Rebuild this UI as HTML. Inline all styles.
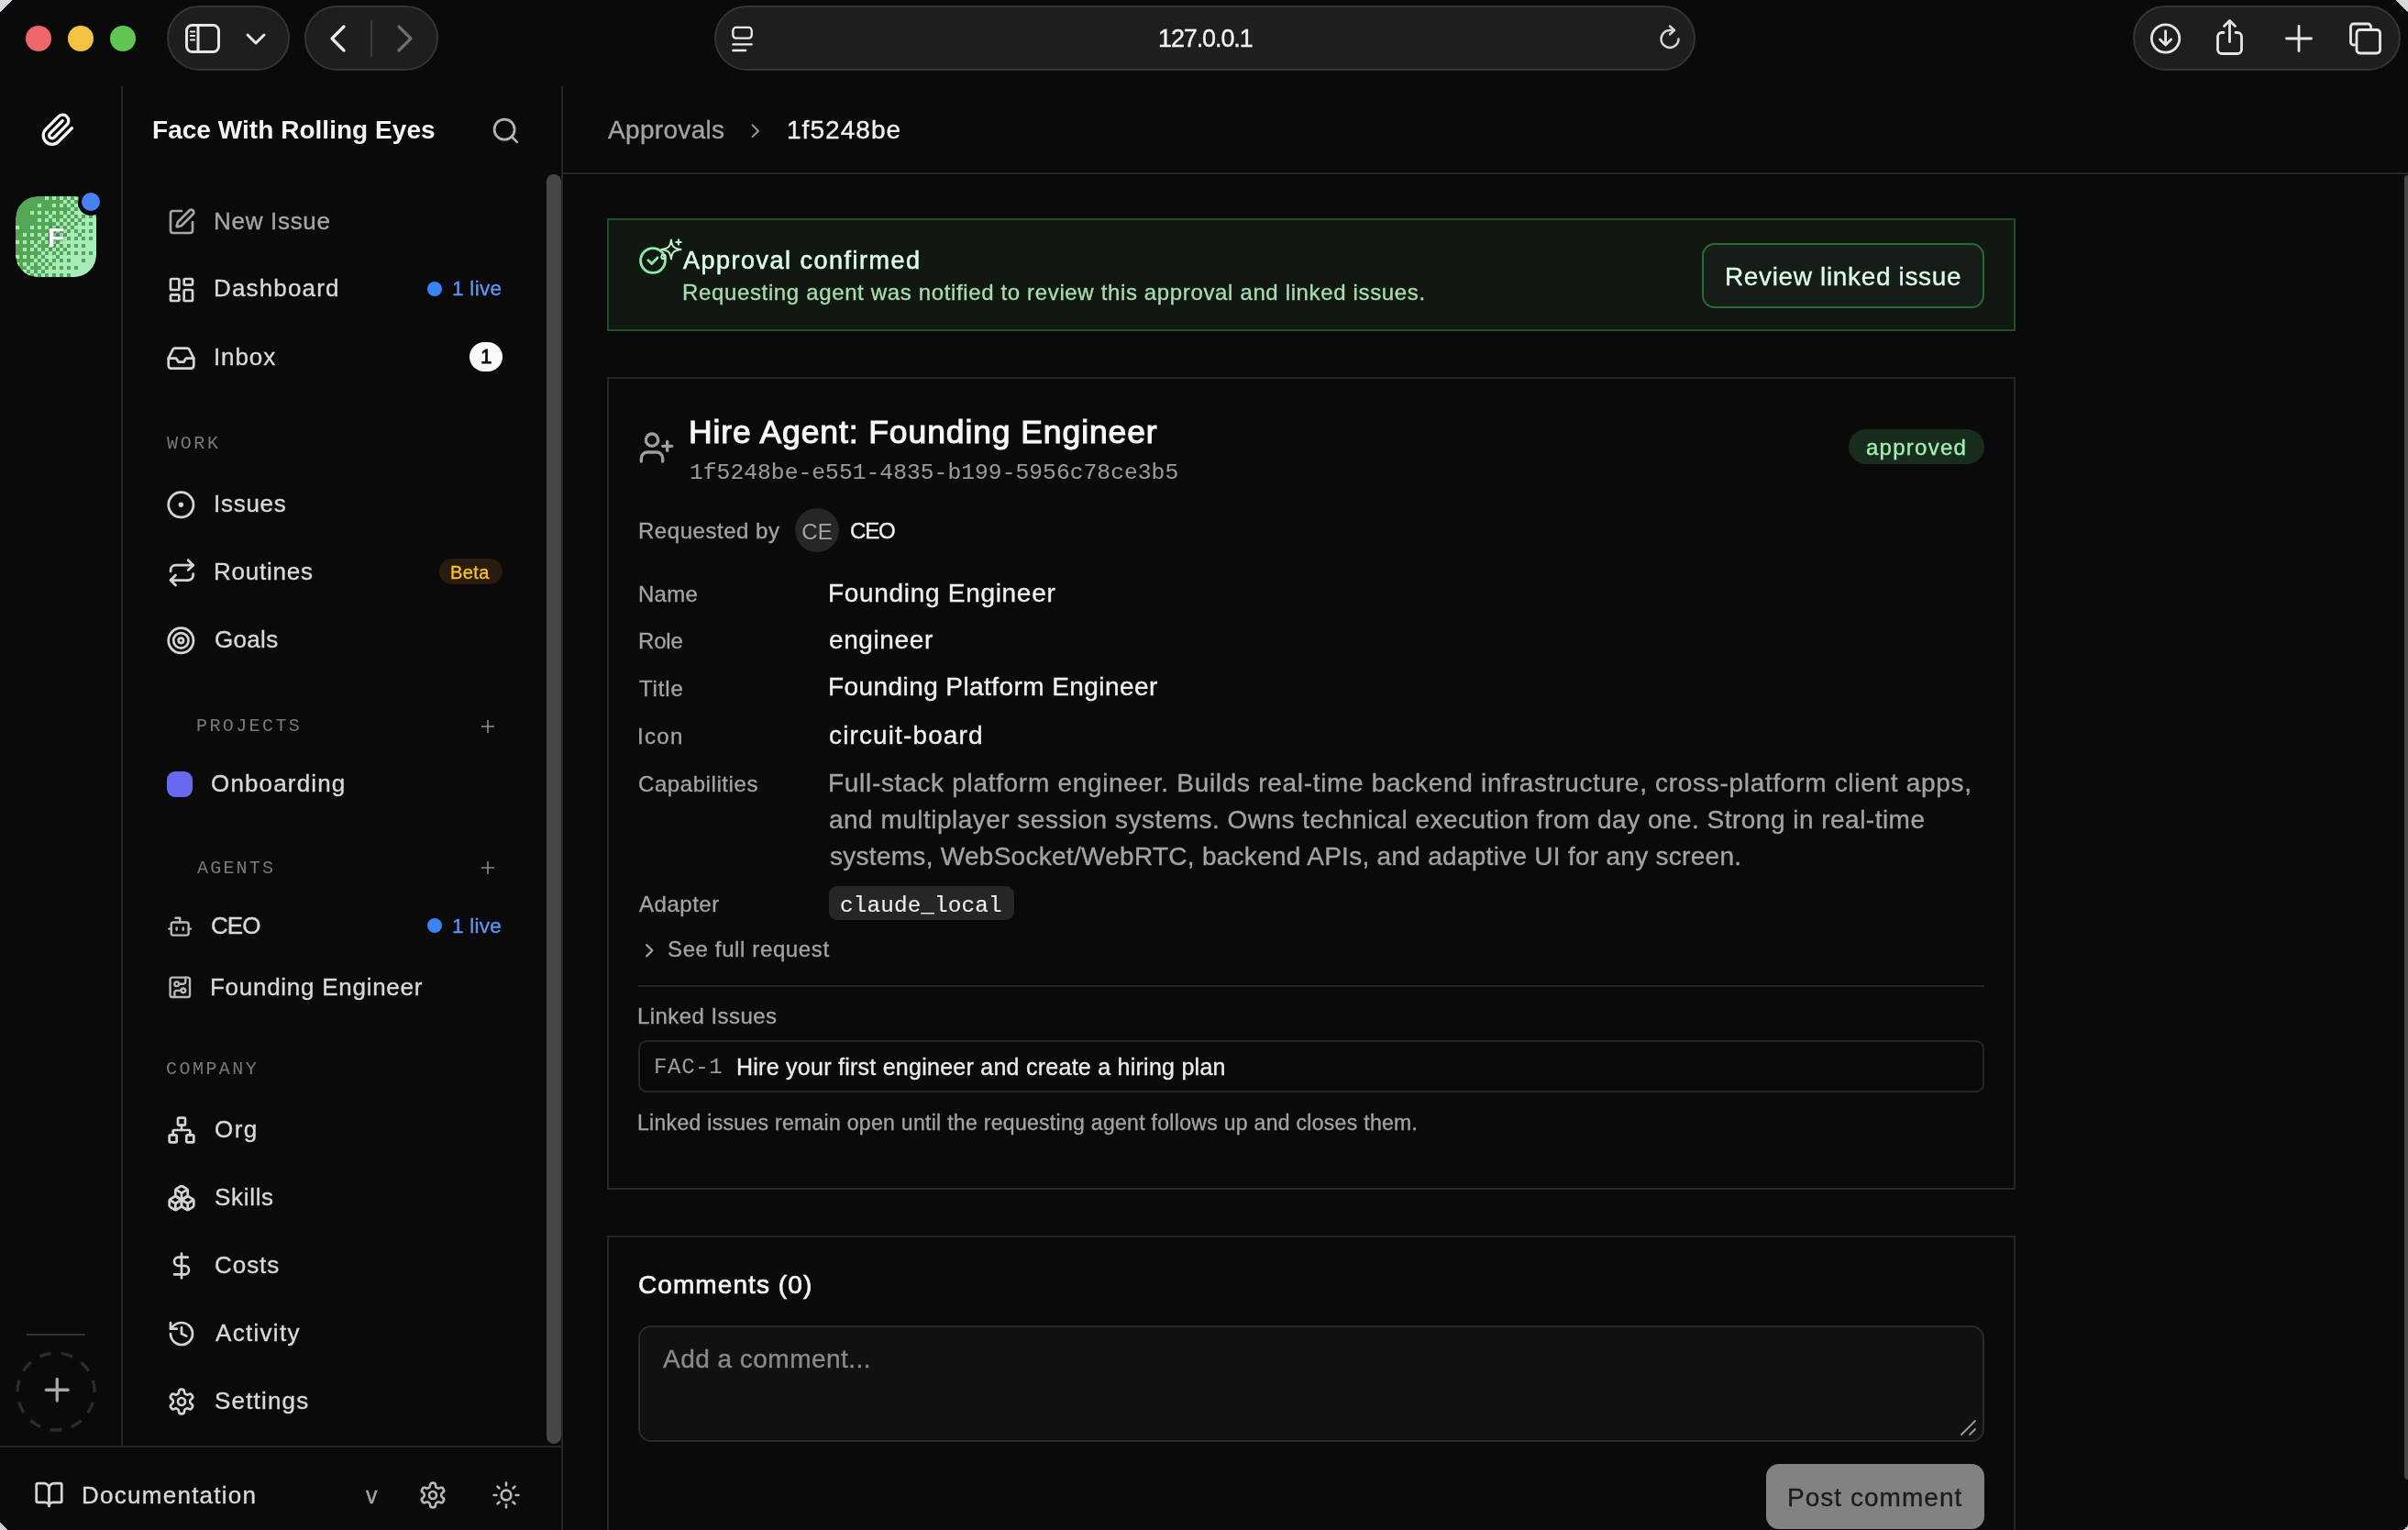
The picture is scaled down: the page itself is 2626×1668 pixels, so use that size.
<!DOCTYPE html>
<html><head><meta charset="utf-8"><title>Approval</title>
<style>
html,body{margin:0;padding:0;background:#0a0a0a;width:2626px;height:1668px;overflow:hidden;font-family:"Liberation Sans", sans-serif;}
.t{position:absolute;white-space:pre;-webkit-font-smoothing:antialiased;will-change:transform;}
.a{position:absolute;box-sizing:border-box;}
svg.i{position:absolute;fill:none;stroke-linecap:round;stroke-linejoin:round;}
</style></head><body>
<div class='a' style='left:0;top:0;width:13px;height:13px;background:linear-gradient(135deg,#d6d9df 50%,transparent 50%)'></div>
<div class='a' style='left:2613px;top:0;width:13px;height:13px;background:linear-gradient(225deg,#d6d9df 50%,transparent 50%)'></div>
<div class='a' style='left:0;top:1660px;width:8px;height:8px;background:linear-gradient(45deg,#cfcfcf 50%,transparent 50%)'></div>
<div class='a' style='left:2621px;top:1663px;width:5px;height:5px;background:linear-gradient(315deg,#cfcfcf 50%,transparent 50%)'></div>
<div class='a' style='left:28px;top:28px;width:28px;height:28px;border-radius:50%;background:#ee6767;'></div>
<div class='a' style='left:74px;top:28px;width:28px;height:28px;border-radius:50%;background:#f5c342;'></div>
<div class='a' style='left:120px;top:28px;width:28px;height:28px;border-radius:50%;background:#61c554;'></div>
<div class='a' style='left:182px;top:6px;width:134px;height:71px;background:#1e1e1e;border:2px solid #343434;border-radius:36px;'></div>
<div class='a' style='left:332px;top:6px;width:146px;height:71px;background:#1e1e1e;border:2px solid #343434;border-radius:36px;'></div>
<div class='a' style='left:779px;top:6px;width:1070px;height:71px;background:#1e1e1e;border:2px solid #343434;border-radius:36px;'></div>
<div class='a' style='left:2326px;top:6px;width:292px;height:71px;background:#1e1e1e;border:2px solid #343434;border-radius:36px;'></div>
<svg class='i' style='left:200px;top:25px' width='42' height='34' viewBox='0 0 42 34' stroke='#e6e6e6' stroke-width='3'><rect x='3.5' y='2.5' width='35' height='29' rx='6'/><path d='M16 3v28'/><path d='M8 9.5h4M8 14h4M8 18.5h4' stroke-width='2.2'/></svg>
<svg class='i' style='left:266px;top:34px' width='26' height='18' viewBox='0 0 26 18' stroke='#e6e6e6' stroke-width='3'><path d='M4 4l9 9 9-9'/></svg>
<svg class='i' style='left:356px;top:24px' width='26' height='36' viewBox='0 0 26 36' stroke='#ebebeb' stroke-width='3.2'><path d='M19 5L6 18l13 13'/></svg>
<div class='a' style='left:404px;top:22px;width:2px;height:40px;background:#3a3a3a;'></div>
<svg class='i' style='left:428px;top:24px' width='26' height='36' viewBox='0 0 26 36' stroke='#6e6e6e' stroke-width='3.2'><path d='M7 5l13 13-13 13'/></svg>
<svg class='i' style='left:795px;top:26px' width='30' height='34' viewBox='0 0 30 34' stroke='#ececec' stroke-width='2.3'><rect x='4.35' y='3.95' width='20.4' height='11.7' rx='3.4'/><path d='M4.35 22.4h20.4M4.35 29h13.9'/></svg>
<svg class='i' style='left:1806px;top:25px' width='32' height='34' viewBox='0 0 32 34' stroke='#d6d6d6' stroke-width='2.4'><path d='M24.5 17.5a9.5 9.5 0 1 1-9.5-9.5h4'/><path d='M15 3.5l5 4.5-5 4.5'/></svg>
<svg class='i' style='left:2341px;top:21px' width='42' height='42' viewBox='0 0 42 42' stroke='#e6e6e6' stroke-width='2.8'><circle cx='20.6' cy='21' r='15.2'/><path d='M20.6 13v14.5M14.5 22l6.1 6 6.1-6'/></svg>
<svg class='i' style='left:2413px;top:19px' width='40' height='44' viewBox='0 0 40 44' stroke='#e6e6e6' stroke-width='2.8'><path d='M12 16.5h-2a4.5 4.5 0 0 0-4.5 4.5v14a4.5 4.5 0 0 0 4.5 4.5h17a4.5 4.5 0 0 0 4.5-4.5V21a4.5 4.5 0 0 0-4.5-4.5h-2'/><path d='M18.5 26.5V4M12.5 9.5l6-6 6 6'/></svg>
<svg class='i' style='left:2490px;top:25px' width='34' height='34' viewBox='0 0 34 34' stroke='#e6e6e6' stroke-width='2.8'><path d='M3.5 17h27M17 3.5v27'/></svg>
<svg class='i' style='left:2558px;top:21px' width='44' height='42' viewBox='0 0 44 42' stroke='#e6e6e6' stroke-width='2.8'><path d='M9.5 28h-1a3 3 0 0 1-3-3V8a3 3 0 0 1 3-3h16a3 3 0 0 1 3 3v1'/><rect x='12' y='11.5' width='25.5' height='25.5' rx='3.5'/></svg>
<div class='a' style='left:132px;top:94px;width:2px;height:1483px;background:#262626;'></div>
<div class='a' style='left:611.5px;top:94px;width:2.0px;height:1574px;background:#262626;'></div>
<div class='a' style='left:0px;top:1576px;width:612px;height:2px;background:#262626;'></div>
<div class='a' style='left:29px;top:1453.5px;width:64px;height:2.0px;background:#333;'></div>
<svg class='i' style='left:17px;top:1472.5px' width='88' height='88' viewBox='0 0 88 88' stroke='#2b2b2b' stroke-width='3.4'><circle cx='44' cy='44' r='42' stroke-dasharray='13 10.99' transform='rotate(81.1 44 44)' stroke-linecap='butt'/></svg>
<svg class='i' style='left:41.75px;top:1495.45px;' width='40.5' height='40.5' viewBox='0 0 24 24' stroke='#a8a8a8' stroke-width='1.95'><path d="M5 12h14"/><path d="M12 5v14"/></svg>
<svg class='i' style='left:44.15px;top:122.35px;' width='38.5' height='38.5' viewBox='0 0 24 24' stroke='#f5f5f5' stroke-width='2.05'><path d="m21.44 11.05-9.19 9.19a6 6 0 0 1-8.49-8.49l8.57-8.57A4 4 0 1 1 18 8.84l-8.59 8.57a2 2 0 0 1-2.83-2.83l8.49-8.48"/></svg>
<svg class='i' style='left:535.40px;top:126.00px;' width='33' height='33' viewBox='0 0 24 24' stroke='#b3b3b3' stroke-width='2'><circle cx="11" cy="11" r="8"/><path d="m21 21-4.3-4.3"/></svg>
<div class='a' style='left:596px;top:190px;width:16px;height:1384px;background:#474747;border-radius:8px;'></div>
<svg class='i' style='left:182.20px;top:225.50px;' width='32' height='32' viewBox='0 0 24 24' stroke='#a6a6a6' stroke-width='2'><path d="M12 3H5a2 2 0 0 0-2 2v14a2 2 0 0 0 2 2h14a2 2 0 0 0 2-2v-7"/><path d="M18.375 2.625a1 1 0 0 1 3 3l-9.013 9.014a2 2 0 0 1-.853.505l-2.873.84a.5.5 0 0 1-.62-.62l.84-2.873a2 2 0 0 1 .506-.852z"/></svg>
<svg class='i' style='left:181.90px;top:300.00px;' width='32' height='32' viewBox='0 0 24 24' stroke='#d4d4d4' stroke-width='2'><rect width="7" height="9" x="3" y="3" rx="1"/><rect width="7" height="5" x="14" y="3" rx="1"/><rect width="7" height="9" x="14" y="12" rx="1"/><rect width="7" height="5" x="3" y="16" rx="1"/></svg>
<svg class='i' style='left:181.30px;top:373.50px;' width='33' height='33' viewBox='0 0 24 24' stroke='#d4d4d4' stroke-width='2'><polyline points="22 12 16 12 14 15 10 15 8 12 2 12"/><path d="M5.45 5.11 2 12v6a2 2 0 0 0 2 2h16a2 2 0 0 0 2-2v-6l-3.45-6.89A2 2 0 0 0 16.760 4H7.24a2 2 0 0 0-1.79 1.11z"/></svg>
<svg class='i' style='left:181.45px;top:533.65px;' width='32.7' height='32.7' viewBox='0 0 24 24' stroke='#d4d4d4' stroke-width='2'><circle cx="12" cy="12" r="10"/><circle cx="12" cy="12" r="1"/></svg>
<svg class='i' style='left:181.55px;top:607.75px;' width='32.7' height='32.7' viewBox='0 0 24 24' stroke='#d4d4d4' stroke-width='2'><path d="m17 2 4 4-4 4"/><path d="M3 11v-1a4 4 0 0 1 4-4h14"/><path d="m7 22-4-4 4-4"/><path d="M21 13v1a4 4 0 0 1-4 4H3"/></svg>
<svg class='i' style='left:181.45px;top:681.55px;' width='32.7' height='32.7' viewBox='0 0 24 24' stroke='#d4d4d4' stroke-width='2'><circle cx="12" cy="12" r="10"/><circle cx="12" cy="12" r="6"/><circle cx="12" cy="12" r="2"/></svg>
<svg class='i' style='left:181.70px;top:995.60px;' width='28.4' height='28.4' viewBox='0 0 24 24' stroke='#b8b8b8' stroke-width='2'><path d="M12 8V4H8"/><rect width="16" height="12" x="4" y="8" rx="2"/><path d="M2 14h2"/><path d="M20 14h2"/><path d="M15 13v2"/><path d="M9 13v2"/></svg>
<svg class='i' style='left:181.60px;top:1061.60px;' width='28.6' height='28.6' viewBox='0 0 24 24' stroke='#b8b8b8' stroke-width='2'><rect width="18" height="18" x="3" y="3" rx="2"/><path d="M11 9h4a2 2 0 0 0 2-2V3"/><circle cx="9" cy="9" r="2"/><path d="M7 21v-4a2 2 0 0 1 2-2h4"/><circle cx="15" cy="15" r="2"/></svg>
<svg class='i' style='left:182.00px;top:1216.00px;' width='32' height='32' viewBox='0 0 24 24' stroke='#d4d4d4' stroke-width='2'><rect x="16" y="16" width="6" height="6" rx="1"/><rect x="2" y="16" width="6" height="6" rx="1"/><rect x="9" y="2" width="6" height="6" rx="1"/><path d="M5 16v-3a1 1 0 0 1 1-1h12a1 1 0 0 1 1 1v3"/><path d="M12 12V8"/></svg>
<svg class='i' style='left:182.00px;top:1290.00px;' width='32' height='32' viewBox='0 0 24 24' stroke='#d4d4d4' stroke-width='2'><path d="M2.97 12.92A2 2 0 0 0 2 14.63v3.24a2 2 0 0 0 .97 1.71l3 1.8a2 2 0 0 0 2.060 0L12 19v-5.5l-5-3-4.03 2.42Z"/><path d="m7 16.5-4.74-2.85"/><path d="m7 16.5 5-3"/><path d="M7 16.5v5.17"/><path d="M12 13.5V19l3.97 2.38a2 2 0 0 0 2.06 0l3-1.8a2 2 0 0 0 .97-1.71v-3.24a2 2 0 0 0-.97-1.71L17 10.5l-5 3Z"/><path d="m17 16.5-5-3"/><path d="m17 16.5 4.740-2.85"/><path d="M17 16.5v5.17"/><path d="M7.97 4.42A2 2 0 0 0 7 6.13v4.37l5 3 5-3V6.13a2 2 0 0 0-.97-1.71l-3-1.8a2 2 0 0 0-2.06 0l-3 1.8Z"/><path d="M12 8 7.26 5.15"/><path d="m12 8 4.74-2.85"/><path d="M12 13.5V8"/></svg>
<svg class='i' style='left:181.50px;top:1364.00px;' width='32' height='32' viewBox='0 0 24 24' stroke='#d4d4d4' stroke-width='2'><line x1="12" x2="12" y1="2" y2="22"/><path d="M17 5H9.5a3.5 3.5 0 0 0 0 7h5a3.5 3.5 0 0 1 0 7H6"/></svg>
<svg class='i' style='left:181.80px;top:1438.10px;' width='32' height='32' viewBox='0 0 24 24' stroke='#d4d4d4' stroke-width='2'><path d="M3 12a9 9 0 1 0 9-9 9.75 9.75 0 0 0-6.74 2.74L3 8"/><path d="M3 3v5h5"/><path d="M12 7v5l4 2"/></svg>
<svg class='i' style='left:181.80px;top:1511.70px;' width='32' height='32' viewBox='0 0 24 24' stroke='#d4d4d4' stroke-width='2'><path d="M12.22 2h-.44a2 2 0 0 0-2 2v.18a2 2 0 0 1-1 1.73l-.43.25a2 2 0 0 1-2 0l-.15-.08a2 2 0 0 0-2.73.73l-.22.38a2 2 0 0 0 .73 2.73l.15.1a2 2 0 0 1 1 1.72v.51a2 2 0 0 1-1 1.74l-.15.09a2 2 0 0 0-.73 2.73l.22.38a2 2 0 0 0 2.73.73l.15-.08a2 2 0 0 1 2 0l.43.25a2 2 0 0 1 1 1.73V20a2 2 0 0 0 2 2h.44a2 2 0 0 0 2-2v-.18a2 2 0 0 1 1-1.73l.43-.25a2 2 0 0 1 2 0l.15.08a2 2 0 0 0 2.73-.73l.22-.39a2 2 0 0 0-.73-2.73l-.15-.08a2 2 0 0 1-1-1.74v-.5a2 2 0 0 1 1-1.74l.15-.09a2 2 0 0 0 .73-2.730l-.22-.38a2 2 0 0 0-2.73-.73l-.15.08a2 2 0 0 1-2 0l-.43-.25a2 2 0 0 1-1-1.73V4a2 2 0 0 0-2-2z"/><circle cx="12" cy="12" r="3"/></svg>
<svg class='i' style='left:37.30px;top:1613.30px;' width='33' height='33' viewBox='0 0 24 24' stroke='#d4d4d4' stroke-width='2'><path d="M12 7v14"/><path d="M3 18a1 1 0 0 1-1-1V4a1 1 0 0 1 1-1h5a4 4 0 0 1 4 4 4 4 0 0 1 4-4h5a1 1 0 0 1 1 1v13a1 1 0 0 1-1 1h-6a3 3 0 0 0-3 3 3 3 0 0 0-3-3z"/></svg>
<svg class='i' style='left:456.00px;top:1613.80px;' width='32' height='32' viewBox='0 0 24 24' stroke='#b8b8b8' stroke-width='2'><path d="M12.22 2h-.44a2 2 0 0 0-2 2v.18a2 2 0 0 1-1 1.73l-.43.25a2 2 0 0 1-2 0l-.15-.08a2 2 0 0 0-2.73.73l-.22.38a2 2 0 0 0 .73 2.73l.15.1a2 2 0 0 1 1 1.72v.51a2 2 0 0 1-1 1.74l-.15.09a2 2 0 0 0-.73 2.73l.22.38a2 2 0 0 0 2.73.73l.15-.08a2 2 0 0 1 2 0l.43.25a2 2 0 0 1 1 1.73V20a2 2 0 0 0 2 2h.44a2 2 0 0 0 2-2v-.18a2 2 0 0 1 1-1.73l.43-.25a2 2 0 0 1 2 0l.15.08a2 2 0 0 0 2.73-.73l.22-.39a2 2 0 0 0-.73-2.73l-.15-.08a2 2 0 0 1-1-1.74v-.5a2 2 0 0 1 1-1.74l.15-.09a2 2 0 0 0 .73-2.730l-.22-.38a2 2 0 0 0-2.73-.73l-.15.08a2 2 0 0 1-2 0l-.43-.25a2 2 0 0 1-1-1.73V4a2 2 0 0 0-2-2z"/><circle cx="12" cy="12" r="3"/></svg>
<svg class='i' style='left:535.60px;top:1613.80px;' width='32' height='32' viewBox='0 0 24 24' stroke='#b8b8b8' stroke-width='2'><circle cx="12" cy="12" r="4"/><path d="M12 2v2"/><path d="M12 20v2"/><path d="m4.93 4.93 1.41 1.41"/><path d="m17.66 17.66 1.41 1.41"/><path d="M2 12h2"/><path d="M20 12h2"/><path d="m6.34 17.66-1.41 1.41"/><path d="m19.07 4.93-1.41 1.41"/></svg>
<div class='a' style='left:465.7px;top:306.8px;width:16.0px;height:16.0px;border-radius:50%;background:#3b82f6;'></div>
<div class='a' style='left:466px;top:1000.9px;width:16px;height:16.0px;border-radius:50%;background:#3b82f6;'></div>
<div class='a' style='left:512px;top:373px;width:36px;height:32px;border-radius:16px;background:#fafafa;'></div>
<div class='a' style='left:479px;top:609px;width:69px;height:28px;border-radius:14px;background:#2b1a0e;'></div>
<svg class='i' style='left:521.00px;top:781.00px;' width='22' height='22' viewBox='0 0 24 24' stroke='#8a8a8a' stroke-width='1.8'><path d="M5 12h14"/><path d="M12 5v14"/></svg>
<svg class='i' style='left:521.00px;top:935.00px;' width='22' height='22' viewBox='0 0 24 24' stroke='#8a8a8a' stroke-width='1.8'><path d="M5 12h14"/><path d="M12 5v14"/></svg>
<div class='a' style='left:181.8px;top:841px;width:28.19999999999999px;height:28px;border-radius:9px;background:#6b68f0;'></div>
<svg class='i' style='left:17px;top:213.5px;border-radius:24px;overflow:hidden' width='88' height='88' viewBox='0 0 88 88'><defs><clipPath id='av'><rect x='0' y='0' width='88' height='88' rx='24'/></clipPath></defs><g clip-path='url(#av)'><rect x='0' y='0' width='88' height='88' fill='#55a655' stroke='none'/><g fill='#a8ebbb' stroke='none'><rect x='32' y='0' width='4' height='4'/><rect x='40' y='0' width='4' height='4'/><rect x='48' y='0' width='4' height='4'/><rect x='56' y='0' width='4' height='4'/><rect x='64' y='0' width='4' height='4'/><rect x='72' y='0' width='4' height='4'/><rect x='80' y='0' width='4' height='4'/><rect x='84' y='0' width='4' height='4'/><rect x='52' y='4' width='4' height='4'/><rect x='60' y='4' width='4' height='4'/><rect x='68' y='4' width='4' height='4'/><rect x='76' y='4' width='4' height='4'/><rect x='84' y='4' width='4' height='4'/><rect x='24' y='8' width='4' height='4'/><rect x='40' y='8' width='4' height='4'/><rect x='48' y='8' width='4' height='4'/><rect x='56' y='8' width='4' height='4'/><rect x='64' y='8' width='4' height='4'/><rect x='72' y='8' width='4' height='4'/><rect x='80' y='8' width='4' height='4'/><rect x='60' y='12' width='4' height='4'/><rect x='68' y='12' width='4' height='4'/><rect x='76' y='12' width='4' height='4'/><rect x='84' y='12' width='4' height='4'/><rect x='16' y='16' width='4' height='4'/><rect x='24' y='16' width='4' height='4'/><rect x='32' y='16' width='4' height='4'/><rect x='40' y='16' width='4' height='4'/><rect x='48' y='16' width='4' height='4'/><rect x='56' y='16' width='4' height='4'/><rect x='64' y='16' width='4' height='4'/><rect x='68' y='16' width='4' height='4'/><rect x='72' y='16' width='4' height='4'/><rect x='80' y='16' width='4' height='4'/><rect x='84' y='16' width='4' height='4'/><rect x='36' y='20' width='4' height='4'/><rect x='52' y='20' width='4' height='4'/><rect x='60' y='20' width='4' height='4'/><rect x='68' y='20' width='4' height='4'/><rect x='76' y='20' width='4' height='4'/><rect x='84' y='20' width='4' height='4'/><rect x='24' y='24' width='4' height='4'/><rect x='32' y='24' width='4' height='4'/><rect x='40' y='24' width='4' height='4'/><rect x='48' y='24' width='4' height='4'/><rect x='56' y='24' width='4' height='4'/><rect x='64' y='24' width='4' height='4'/><rect x='72' y='24' width='4' height='4'/><rect x='76' y='24' width='4' height='4'/><rect x='80' y='24' width='4' height='4'/><rect x='84' y='24' width='4' height='4'/><rect x='44' y='28' width='4' height='4'/><rect x='52' y='28' width='4' height='4'/><rect x='60' y='28' width='4' height='4'/><rect x='68' y='28' width='4' height='4'/><rect x='76' y='28' width='4' height='4'/><rect x='84' y='28' width='4' height='4'/><rect x='0' y='32' width='4' height='4'/><rect x='16' y='32' width='4' height='4'/><rect x='24' y='32' width='4' height='4'/><rect x='32' y='32' width='4' height='4'/><rect x='40' y='32' width='4' height='4'/><rect x='48' y='32' width='4' height='4'/><rect x='56' y='32' width='4' height='4'/><rect x='64' y='32' width='4' height='4'/><rect x='68' y='32' width='4' height='4'/><rect x='72' y='32' width='4' height='4'/><rect x='76' y='32' width='4' height='4'/><rect x='80' y='32' width='4' height='4'/><rect x='84' y='32' width='4' height='4'/><rect x='36' y='36' width='4' height='4'/><rect x='44' y='36' width='4' height='4'/><rect x='52' y='36' width='4' height='4'/><rect x='60' y='36' width='4' height='4'/><rect x='68' y='36' width='4' height='4'/><rect x='76' y='36' width='4' height='4'/><rect x='84' y='36' width='4' height='4'/><rect x='8' y='40' width='4' height='4'/><rect x='16' y='40' width='4' height='4'/><rect x='24' y='40' width='4' height='4'/><rect x='32' y='40' width='4' height='4'/><rect x='40' y='40' width='4' height='4'/><rect x='48' y='40' width='4' height='4'/><rect x='56' y='40' width='4' height='4'/><rect x='60' y='40' width='4' height='4'/><rect x='64' y='40' width='4' height='4'/><rect x='72' y='40' width='4' height='4'/><rect x='76' y='40' width='4' height='4'/><rect x='80' y='40' width='4' height='4'/><rect x='84' y='40' width='4' height='4'/><rect x='28' y='44' width='4' height='4'/><rect x='44' y='44' width='4' height='4'/><rect x='52' y='44' width='4' height='4'/><rect x='60' y='44' width='4' height='4'/><rect x='68' y='44' width='4' height='4'/><rect x='76' y='44' width='4' height='4'/><rect x='84' y='44' width='4' height='4'/><rect x='0' y='48' width='4' height='4'/><rect x='8' y='48' width='4' height='4'/><rect x='16' y='48' width='4' height='4'/><rect x='24' y='48' width='4' height='4'/><rect x='32' y='48' width='4' height='4'/><rect x='40' y='48' width='4' height='4'/><rect x='48' y='48' width='4' height='4'/><rect x='52' y='48' width='4' height='4'/><rect x='56' y='48' width='4' height='4'/><rect x='60' y='48' width='4' height='4'/><rect x='64' y='48' width='4' height='4'/><rect x='68' y='48' width='4' height='4'/><rect x='72' y='48' width='4' height='4'/><rect x='76' y='48' width='4' height='4'/><rect x='80' y='48' width='4' height='4'/><rect x='84' y='48' width='4' height='4'/><rect x='20' y='52' width='4' height='4'/><rect x='36' y='52' width='4' height='4'/><rect x='44' y='52' width='4' height='4'/><rect x='52' y='52' width='4' height='4'/><rect x='60' y='52' width='4' height='4'/><rect x='68' y='52' width='4' height='4'/><rect x='76' y='52' width='4' height='4'/><rect x='80' y='52' width='4' height='4'/><rect x='84' y='52' width='4' height='4'/><rect x='8' y='56' width='4' height='4'/><rect x='16' y='56' width='4' height='4'/><rect x='24' y='56' width='4' height='4'/><rect x='32' y='56' width='4' height='4'/><rect x='40' y='56' width='4' height='4'/><rect x='48' y='56' width='4' height='4'/><rect x='56' y='56' width='4' height='4'/><rect x='60' y='56' width='4' height='4'/><rect x='64' y='56' width='4' height='4'/><rect x='68' y='56' width='4' height='4'/><rect x='72' y='56' width='4' height='4'/><rect x='76' y='56' width='4' height='4'/><rect x='80' y='56' width='4' height='4'/><rect x='84' y='56' width='4' height='4'/><rect x='28' y='60' width='4' height='4'/><rect x='36' y='60' width='4' height='4'/><rect x='44' y='60' width='4' height='4'/><rect x='52' y='60' width='4' height='4'/><rect x='60' y='60' width='4' height='4'/><rect x='68' y='60' width='4' height='4'/><rect x='76' y='60' width='4' height='4'/><rect x='84' y='60' width='4' height='4'/><rect x='0' y='64' width='4' height='4'/><rect x='8' y='64' width='4' height='4'/><rect x='16' y='64' width='4' height='4'/><rect x='24' y='64' width='4' height='4'/><rect x='32' y='64' width='4' height='4'/><rect x='36' y='64' width='4' height='4'/><rect x='40' y='64' width='4' height='4'/><rect x='48' y='64' width='4' height='4'/><rect x='52' y='64' width='4' height='4'/><rect x='56' y='64' width='4' height='4'/><rect x='60' y='64' width='4' height='4'/><rect x='64' y='64' width='4' height='4'/><rect x='68' y='64' width='4' height='4'/><rect x='72' y='64' width='4' height='4'/><rect x='76' y='64' width='4' height='4'/><rect x='80' y='64' width='4' height='4'/><rect x='84' y='64' width='4' height='4'/><rect x='20' y='68' width='4' height='4'/><rect x='28' y='68' width='4' height='4'/><rect x='36' y='68' width='4' height='4'/><rect x='44' y='68' width='4' height='4'/><rect x='52' y='68' width='4' height='4'/><rect x='60' y='68' width='4' height='4'/><rect x='64' y='68' width='4' height='4'/><rect x='68' y='68' width='4' height='4'/><rect x='76' y='68' width='4' height='4'/><rect x='80' y='68' width='4' height='4'/><rect x='84' y='68' width='4' height='4'/><rect x='0' y='72' width='4' height='4'/><rect x='8' y='72' width='4' height='4'/><rect x='16' y='72' width='4' height='4'/><rect x='24' y='72' width='4' height='4'/><rect x='32' y='72' width='4' height='4'/><rect x='40' y='72' width='4' height='4'/><rect x='44' y='72' width='4' height='4'/><rect x='48' y='72' width='4' height='4'/><rect x='52' y='72' width='4' height='4'/><rect x='56' y='72' width='4' height='4'/><rect x='60' y='72' width='4' height='4'/><rect x='64' y='72' width='4' height='4'/><rect x='68' y='72' width='4' height='4'/><rect x='72' y='72' width='4' height='4'/><rect x='76' y='72' width='4' height='4'/><rect x='80' y='72' width='4' height='4'/><rect x='84' y='72' width='4' height='4'/><rect x='12' y='76' width='4' height='4'/><rect x='28' y='76' width='4' height='4'/><rect x='36' y='76' width='4' height='4'/><rect x='44' y='76' width='4' height='4'/><rect x='52' y='76' width='4' height='4'/><rect x='60' y='76' width='4' height='4'/><rect x='68' y='76' width='4' height='4'/><rect x='72' y='76' width='4' height='4'/><rect x='76' y='76' width='4' height='4'/><rect x='80' y='76' width='4' height='4'/><rect x='84' y='76' width='4' height='4'/><rect x='0' y='80' width='4' height='4'/><rect x='8' y='80' width='4' height='4'/><rect x='16' y='80' width='4' height='4'/><rect x='24' y='80' width='4' height='4'/><rect x='32' y='80' width='4' height='4'/><rect x='36' y='80' width='4' height='4'/><rect x='40' y='80' width='4' height='4'/><rect x='44' y='80' width='4' height='4'/><rect x='48' y='80' width='4' height='4'/><rect x='52' y='80' width='4' height='4'/><rect x='56' y='80' width='4' height='4'/><rect x='60' y='80' width='4' height='4'/><rect x='64' y='80' width='4' height='4'/><rect x='68' y='80' width='4' height='4'/><rect x='72' y='80' width='4' height='4'/><rect x='76' y='80' width='4' height='4'/><rect x='80' y='80' width='4' height='4'/><rect x='84' y='80' width='4' height='4'/><rect x='4' y='84' width='4' height='4'/><rect x='12' y='84' width='4' height='4'/><rect x='20' y='84' width='4' height='4'/><rect x='28' y='84' width='4' height='4'/><rect x='36' y='84' width='4' height='4'/><rect x='44' y='84' width='4' height='4'/><rect x='52' y='84' width='4' height='4'/><rect x='60' y='84' width='4' height='4'/><rect x='64' y='84' width='4' height='4'/><rect x='68' y='84' width='4' height='4'/><rect x='72' y='84' width='4' height='4'/><rect x='76' y='84' width='4' height='4'/><rect x='80' y='84' width='4' height='4'/><rect x='84' y='84' width='4' height='4'/></g></g></svg>
<div class='t' style='left:52.2px;top:244.4px;font-size:30px;line-height:30px;color:#fff;font-weight:700;text-shadow:0 0 4px rgba(0,0,0,.5)'>F</div>
<div class='a' style='left:85px;top:206.5px;width:28px;height:28.0px;border-radius:50%;background:#0a0a0a;'></div>
<div class='a' style='left:89px;top:210px;width:20px;height:20px;border-radius:50%;background:#4882f2;'></div>
<div class='a' style='left:612px;top:188px;width:2014px;height:2px;background:#262626;'></div>
<svg class='i' style='left:811.25px;top:129.75px;' width='25.5' height='25.5' viewBox='0 0 24 24' stroke='#9a9a9a' stroke-width='1.9'><path d="m9 18 6-6-6-6"/></svg>
<div class='a' style='left:2622px;top:191px;width:8px;height:1422px;background:#474747;border-radius:4px;'></div>
<div class='a' style='left:662px;top:237.8px;width:1536px;height:123.39999999999998px;background:#111811;border:2px solid #1f4e28;'></div>
<svg class='i' style='left:690px;top:250px' width='70' height='55' viewBox='0 0 70 55' stroke='#8ae8a8' stroke-width='2.9'><circle cx='22' cy='34' r='13.4'/><path d='M16.9 33.8L20.7 37.4L27 30.9'/><g stroke='#c2ecca' stroke-width='2'><circle cx='33.5' cy='29.9' r='2.2'/><path d='M41.9 11.4C42.8 18.6 44.4 20.9 52.6 21.9C44.4 22.9 42.8 25.2 41.9 32.4C41 25.2 39.4 22.9 31.2 21.9C39.4 20.9 41 18.6 41.9 11.4Z'/><path d='M50 11.3v5.4M47.3 14h5.4'/></g></svg>
<div class='a' style='left:1856px;top:264.5px;width:308px;height:71.0px;background:#161c17;border:2px solid #2b6a36;border-radius:14px;'></div>
<div class='a' style='left:662px;top:411px;width:1536px;height:886px;border:2px solid #262626;'></div>
<svg class='i' style='left:696.20px;top:468.00px;' width='40' height='40' viewBox='0 0 24 24' stroke='#9e9e9e' stroke-width='2'><path d="M16 21v-2a4 4 0 0 0-4-4H6a4 4 0 0 0-4 4v2"/><circle cx="9" cy="7" r="4"/><line x1="19" x2="19" y1="8" y2="14"/><line x1="22" x2="16" y1="11" y2="11"/></svg>
<div class='a' style='left:2016px;top:468px;width:148px;height:38px;background:#192d1e;border-radius:19px;'></div>
<div class='a' style='left:867px;top:554px;width:48px;height:48px;background:#262626;border-radius:50%;'></div>
<div class='t' style='left:873px;top:567.5px;font-size:24px;line-height:24px;color:#a3a3a3;width:36px;text-align:center'>CE</div>
<div class='a' style='left:904.4px;top:966.3px;width:201.60000000000002px;height:37.0px;background:#262626;border-radius:9px;'></div>
<svg class='i' style='left:695.65px;top:1023.95px;' width='24.5' height='24.5' viewBox='0 0 24 24' stroke='#a3a3a3' stroke-width='2.1'><path d="m9 18 6-6-6-6"/></svg>
<div class='a' style='left:696px;top:1073.5px;width:1468px;height:2.0px;background:#262626;'></div>
<div class='a' style='left:696px;top:1134px;width:1468px;height:57px;border:2px solid #262626;border-radius:9px;'></div>
<div class='a' style='left:662px;top:1346.5px;width:1536px;height:353.5px;border:2px solid #262626;'></div>
<div class='a' style='left:696px;top:1444.5px;width:1468px;height:127.0px;background:#111111;border:2px solid #2a2a2a;border-radius:14px;'></div>
<svg class='i' style='left:2136px;top:1544px' width='24' height='24' viewBox='0 0 24 24' stroke='#9a9a9a' stroke-width='1.8'><path d='M3 20L18 5M12 20l6-6'/></svg>
<div class='a' style='left:1926px;top:1595.5px;width:238px;height:71.5px;background:#828282;border-radius:14px;'></div>
<div class='t' style='left:1263.0px;top:29.44px;font-size:27px;line-height:27px;color:#f2f2f2;font-weight:400;font-family:"Liberation Sans", sans-serif;-webkit-text-stroke:0.35px #f2f2f2;letter-spacing:-1.111px;'>127.0.0.1</div><div class='t' style='left:166.0px;top:128.30px;font-size:28px;line-height:28px;color:#f5f5f5;font-weight:700;font-family:"Liberation Sans", sans-serif;-webkit-text-stroke:0px #f5f5f5;letter-spacing:0.036px;'>Face With Rolling Eyes</div><div class='t' style='left:233.3px;top:228.19px;font-size:26px;line-height:26px;color:#a6a6a6;font-weight:400;font-family:"Liberation Sans", sans-serif;-webkit-text-stroke:0.35px #a6a6a6;letter-spacing:0.698px;'>New Issue</div><div class='t' style='left:233.3px;top:301.49px;font-size:26px;line-height:26px;color:#d9d9d9;font-weight:400;font-family:"Liberation Sans", sans-serif;-webkit-text-stroke:0.35px #d9d9d9;letter-spacing:1.158px;'>Dashboard</div><div class='t' style='left:492.8px;top:304.25px;font-size:22.5px;line-height:22.5px;color:#5b95f5;font-weight:400;font-family:"Liberation Sans", sans-serif;-webkit-text-stroke:0.35px #5b95f5;letter-spacing:0.298px;'>1 live</div><div class='t' style='left:233.3px;top:375.99px;font-size:26px;line-height:26px;color:#d9d9d9;font-weight:400;font-family:"Liberation Sans", sans-serif;-webkit-text-stroke:0.35px #d9d9d9;letter-spacing:0.899px;'>Inbox</div><div class='t' style='left:181.8px;top:474.47px;font-size:20px;line-height:20px;color:#7a7a7a;font-weight:400;font-family:"Liberation Mono", monospace;-webkit-text-stroke:0px #7a7a7a;letter-spacing:2.665px;'>WORK</div><div class='t' style='left:233.3px;top:536.19px;font-size:26px;line-height:26px;color:#d9d9d9;font-weight:400;font-family:"Liberation Sans", sans-serif;-webkit-text-stroke:0.35px #d9d9d9;letter-spacing:0.731px;'>Issues</div><div class='t' style='left:233.3px;top:610.19px;font-size:26px;line-height:26px;color:#d9d9d9;font-weight:400;font-family:"Liberation Sans", sans-serif;-webkit-text-stroke:0.35px #d9d9d9;letter-spacing:0.769px;'>Routines</div><div class='t' style='left:234.3px;top:683.59px;font-size:26px;line-height:26px;color:#d9d9d9;font-weight:400;font-family:"Liberation Sans", sans-serif;-webkit-text-stroke:0.35px #d9d9d9;letter-spacing:0.320px;'>Goals</div><div class='t' style='left:213.9px;top:782.47px;font-size:20px;line-height:20px;color:#7a7a7a;font-weight:400;font-family:"Liberation Mono", monospace;-webkit-text-stroke:0px #7a7a7a;letter-spacing:2.398px;'>PROJECTS</div><div class='t' style='left:230.0px;top:841.29px;font-size:26px;line-height:26px;color:#d9d9d9;font-weight:400;font-family:"Liberation Sans", sans-serif;-webkit-text-stroke:0.35px #d9d9d9;letter-spacing:1.154px;'>Onboarding</div><div class='t' style='left:214.9px;top:936.87px;font-size:20px;line-height:20px;color:#7a7a7a;font-weight:400;font-family:"Liberation Mono", monospace;-webkit-text-stroke:0px #7a7a7a;letter-spacing:2.198px;'>AGENTS</div><div class='t' style='left:230.0px;top:995.79px;font-size:26px;line-height:26px;color:#d9d9d9;font-weight:400;font-family:"Liberation Sans", sans-serif;-webkit-text-stroke:0.35px #d9d9d9;letter-spacing:-0.959px;'>CEO</div><div class='t' style='left:493.4px;top:998.75px;font-size:22.5px;line-height:22.5px;color:#5b95f5;font-weight:400;font-family:"Liberation Sans", sans-serif;-webkit-text-stroke:0.35px #5b95f5;letter-spacing:0.258px;'>1 live</div><div class='t' style='left:229.0px;top:1062.89px;font-size:26px;line-height:26px;color:#d9d9d9;font-weight:400;font-family:"Liberation Sans", sans-serif;-webkit-text-stroke:0.35px #d9d9d9;letter-spacing:0.728px;'>Founding Engineer</div><div class='t' style='left:181.2px;top:1155.87px;font-size:20px;line-height:20px;color:#7a7a7a;font-weight:400;font-family:"Liberation Mono", monospace;-webkit-text-stroke:0px #7a7a7a;letter-spacing:2.465px;'>COMPANY</div><div class='t' style='left:234.3px;top:1217.99px;font-size:26px;line-height:26px;color:#d9d9d9;font-weight:400;font-family:"Liberation Sans", sans-serif;-webkit-text-stroke:0.35px #d9d9d9;letter-spacing:1.459px;'>Org</div><div class='t' style='left:234.3px;top:1291.79px;font-size:26px;line-height:26px;color:#d9d9d9;font-weight:400;font-family:"Liberation Sans", sans-serif;-webkit-text-stroke:0.35px #d9d9d9;letter-spacing:0.686px;'>Skills</div><div class='t' style='left:234.3px;top:1365.79px;font-size:26px;line-height:26px;color:#d9d9d9;font-weight:400;font-family:"Liberation Sans", sans-serif;-webkit-text-stroke:0.35px #d9d9d9;letter-spacing:0.960px;'>Costs</div><div class='t' style='left:235.3px;top:1439.79px;font-size:26px;line-height:26px;color:#d9d9d9;font-weight:400;font-family:"Liberation Sans", sans-serif;-webkit-text-stroke:0.35px #d9d9d9;letter-spacing:1.294px;'>Activity</div><div class='t' style='left:234.3px;top:1513.69px;font-size:26px;line-height:26px;color:#d9d9d9;font-weight:400;font-family:"Liberation Sans", sans-serif;-webkit-text-stroke:0.35px #d9d9d9;letter-spacing:1.179px;'>Settings</div><div class='t' style='left:89.4px;top:1616.99px;font-size:26px;line-height:26px;color:#d9d9d9;font-weight:400;font-family:"Liberation Sans", sans-serif;-webkit-text-stroke:0.35px #d9d9d9;letter-spacing:1.265px;'>Documentation</div><div class='t' style='left:398.6px;top:1617.84px;font-size:25px;line-height:25px;color:#a3a3a3;font-weight:400;font-family:"Liberation Sans", sans-serif;-webkit-text-stroke:0.35px #a3a3a3;letter-spacing:-0.900px;'>v</div><div class='t' style='left:523.7px;top:377.95px;font-size:22.5px;line-height:22.5px;color:#0b0b0b;font-weight:400;font-family:"Liberation Sans", sans-serif;-webkit-text-stroke:0.8px #0b0b0b;'>1</div><div class='t' style='left:491.2px;top:613.77px;font-size:20px;line-height:20px;color:#f7c31f;font-weight:400;font-family:"Liberation Sans", sans-serif;-webkit-text-stroke:0.35px #f7c31f;letter-spacing:0.393px;'>Beta</div><div class='t' style='left:663.3px;top:127.50px;font-size:28px;line-height:28px;color:#a3a3a3;font-weight:400;font-family:"Liberation Sans", sans-serif;-webkit-text-stroke:0.35px #a3a3a3;letter-spacing:0.324px;'>Approvals</div><div class='t' style='left:857.5px;top:127.50px;font-size:28px;line-height:28px;color:#f2f2f2;font-weight:400;font-family:"Liberation Sans", sans-serif;-webkit-text-stroke:0.35px #f2f2f2;letter-spacing:1.041px;'>1f5248be</div><div class='t' style='left:745.3px;top:270.64px;font-size:27px;line-height:27px;color:#dcfce7;font-weight:400;font-family:"Liberation Sans", sans-serif;-webkit-text-stroke:0.6px #dcfce7;letter-spacing:1.489px;'>Approval confirmed</div><div class='t' style='left:744.3px;top:307.28px;font-size:24px;line-height:24px;color:#a7dcae;font-weight:400;font-family:"Liberation Sans", sans-serif;-webkit-text-stroke:0.35px #a7dcae;letter-spacing:0.643px;'>Requesting agent was notified to review this approval and linked issues.</div><div class='t' style='left:1880.5px;top:287.50px;font-size:28px;line-height:28px;color:#dcfce7;font-weight:400;font-family:"Liberation Sans", sans-serif;-webkit-text-stroke:0.35px #dcfce7;letter-spacing:0.644px;'>Review linked issue</div><div class='t' style='left:751.2px;top:454.05px;font-size:35.5px;line-height:35.5px;color:#f7f7f7;font-weight:400;font-family:"Liberation Sans", sans-serif;-webkit-text-stroke:1.1px #f7f7f7;letter-spacing:0.899px;'>Hire Agent: Founding Engineer</div><div class='t' style='left:752.2px;top:503.58px;font-size:24.6px;line-height:24.6px;color:#9a9a9a;font-weight:400;font-family:"Liberation Mono", monospace;-webkit-text-stroke:0.1px #9a9a9a;letter-spacing:0.053px;'>1f5248be-e551-4835-b199-5956c78ce3b5</div><div class='t' style='left:2035.0px;top:475.68px;font-size:24px;line-height:24px;color:#a2efb4;font-weight:400;font-family:"Liberation Sans", sans-serif;-webkit-text-stroke:0.35px #a2efb4;letter-spacing:1.267px;'>approved</div><div class='t' style='left:696.0px;top:567.18px;font-size:24px;line-height:24px;color:#a3a3a3;font-weight:400;font-family:"Liberation Sans", sans-serif;-webkit-text-stroke:0.35px #a3a3a3;letter-spacing:0.536px;'>Requested by</div><div class='t' style='left:926.6px;top:567.18px;font-size:24px;line-height:24px;color:#f0f0f0;font-weight:400;font-family:"Liberation Sans", sans-serif;-webkit-text-stroke:0.35px #f0f0f0;letter-spacing:-1.170px;'>CEO</div><div class='t' style='left:696.0px;top:635.68px;font-size:24px;line-height:24px;color:#a3a3a3;font-weight:400;font-family:"Liberation Sans", sans-serif;-webkit-text-stroke:0.35px #a3a3a3;letter-spacing:0.276px;'>Name</div><div class='t' style='left:696.0px;top:687.28px;font-size:24px;line-height:24px;color:#a3a3a3;font-weight:400;font-family:"Liberation Sans", sans-serif;-webkit-text-stroke:0.35px #a3a3a3;letter-spacing:-0.204px;'>Role</div><div class='t' style='left:697.0px;top:738.78px;font-size:24px;line-height:24px;color:#a3a3a3;font-weight:400;font-family:"Liberation Sans", sans-serif;-webkit-text-stroke:0.35px #a3a3a3;letter-spacing:0.825px;'>Title</div><div class='t' style='left:695.0px;top:791.08px;font-size:24px;line-height:24px;color:#a3a3a3;font-weight:400;font-family:"Liberation Sans", sans-serif;-webkit-text-stroke:0.35px #a3a3a3;letter-spacing:1.328px;'>Icon</div><div class='t' style='left:696.0px;top:842.68px;font-size:24px;line-height:24px;color:#a3a3a3;font-weight:400;font-family:"Liberation Sans", sans-serif;-webkit-text-stroke:0.35px #a3a3a3;letter-spacing:0.576px;'>Capabilities</div><div class='t' style='left:697.0px;top:973.68px;font-size:24px;line-height:24px;color:#a3a3a3;font-weight:400;font-family:"Liberation Sans", sans-serif;-webkit-text-stroke:0.35px #a3a3a3;letter-spacing:0.522px;'>Adapter</div><div class='t' style='left:903.2px;top:632.50px;font-size:28px;line-height:28px;color:#f0f0f0;font-weight:400;font-family:"Liberation Sans", sans-serif;-webkit-text-stroke:0.35px #f0f0f0;letter-spacing:0.694px;'>Founding Engineer</div><div class='t' style='left:904.2px;top:683.90px;font-size:28px;line-height:28px;color:#f0f0f0;font-weight:400;font-family:"Liberation Sans", sans-serif;-webkit-text-stroke:0.35px #f0f0f0;letter-spacing:0.607px;'>engineer</div><div class='t' style='left:903.2px;top:735.40px;font-size:28px;line-height:28px;color:#f0f0f0;font-weight:400;font-family:"Liberation Sans", sans-serif;-webkit-text-stroke:0.35px #f0f0f0;letter-spacing:0.423px;'>Founding Platform Engineer</div><div class='t' style='left:904.2px;top:787.70px;font-size:28px;line-height:28px;color:#f0f0f0;font-weight:400;font-family:"Liberation Sans", sans-serif;-webkit-text-stroke:0.35px #f0f0f0;letter-spacing:1.126px;'>circuit-board</div><div class='t' style='left:903.2px;top:840.00px;font-size:28px;line-height:28px;color:#a3a3a3;font-weight:400;font-family:"Liberation Sans", sans-serif;-webkit-text-stroke:0.35px #a3a3a3;letter-spacing:0.694px;'>Full-stack platform engineer. Builds real-time backend infrastructure, cross-platform client apps,</div><div class='t' style='left:904.2px;top:880.10px;font-size:28px;line-height:28px;color:#a3a3a3;font-weight:400;font-family:"Liberation Sans", sans-serif;-webkit-text-stroke:0.35px #a3a3a3;letter-spacing:0.482px;'>and multiplayer session systems. Owns technical execution from day one. Strong in real-time</div><div class='t' style='left:905.2px;top:919.50px;font-size:28px;line-height:28px;color:#a3a3a3;font-weight:400;font-family:"Liberation Sans", sans-serif;-webkit-text-stroke:0.35px #a3a3a3;letter-spacing:0.279px;'>systems, WebSocket/WebRTC, backend APIs, and adaptive UI for any screen.</div><div class='t' style='left:916.4px;top:975.73px;font-size:24.3px;line-height:24.3px;color:#f0f0f0;font-weight:400;font-family:"Liberation Mono", monospace;-webkit-text-stroke:0.1px #f0f0f0;letter-spacing:0.147px;'>claude_local</div><div class='t' style='left:728.0px;top:1023.08px;font-size:24px;line-height:24px;color:#a3a3a3;font-weight:400;font-family:"Liberation Sans", sans-serif;-webkit-text-stroke:0.35px #a3a3a3;letter-spacing:0.620px;'>See full request</div><div class='t' style='left:695.2px;top:1096.08px;font-size:24px;line-height:24px;color:#a3a3a3;font-weight:400;font-family:"Liberation Sans", sans-serif;-webkit-text-stroke:0.35px #a3a3a3;letter-spacing:0.437px;'>Linked Issues</div><div class='t' style='left:713.0px;top:1152.08px;font-size:24px;line-height:24px;color:#9a9a9a;font-weight:400;font-family:"Liberation Mono", monospace;-webkit-text-stroke:0.1px #9a9a9a;letter-spacing:0.673px;'>FAC-1</div><div class='t' style='left:802.6px;top:1151.24px;font-size:25px;line-height:25px;color:#ececec;font-weight:400;font-family:"Liberation Sans", sans-serif;-webkit-text-stroke:0.35px #ececec;letter-spacing:0.258px;'>Hire your first engineer and create a hiring plan</div><div class='t' style='left:695.2px;top:1212.93px;font-size:23px;line-height:23px;color:#a3a3a3;font-weight:400;font-family:"Liberation Sans", sans-serif;-webkit-text-stroke:0.35px #a3a3a3;letter-spacing:0.300px;'>Linked issues remain open until the requesting agent follows up and closes them.</div><div class='t' style='left:695.7px;top:1386.60px;font-size:28px;line-height:28px;color:#f5f5f5;font-weight:400;font-family:"Liberation Sans", sans-serif;-webkit-text-stroke:0.7px #f5f5f5;letter-spacing:1.078px;'>Comments (0)</div><div class='t' style='left:723.2px;top:1468.30px;font-size:28px;line-height:28px;color:#8a8a8a;font-weight:400;font-family:"Liberation Sans", sans-serif;-webkit-text-stroke:0.35px #8a8a8a;letter-spacing:0.476px;'>Add a comment...</div><div class='t' style='left:1948.5px;top:1618.60px;font-size:28px;line-height:28px;color:#1c1c1c;font-weight:400;font-family:"Liberation Sans", sans-serif;-webkit-text-stroke:0.35px #1c1c1c;letter-spacing:1.030px;'>Post comment</div>
</body></html>
